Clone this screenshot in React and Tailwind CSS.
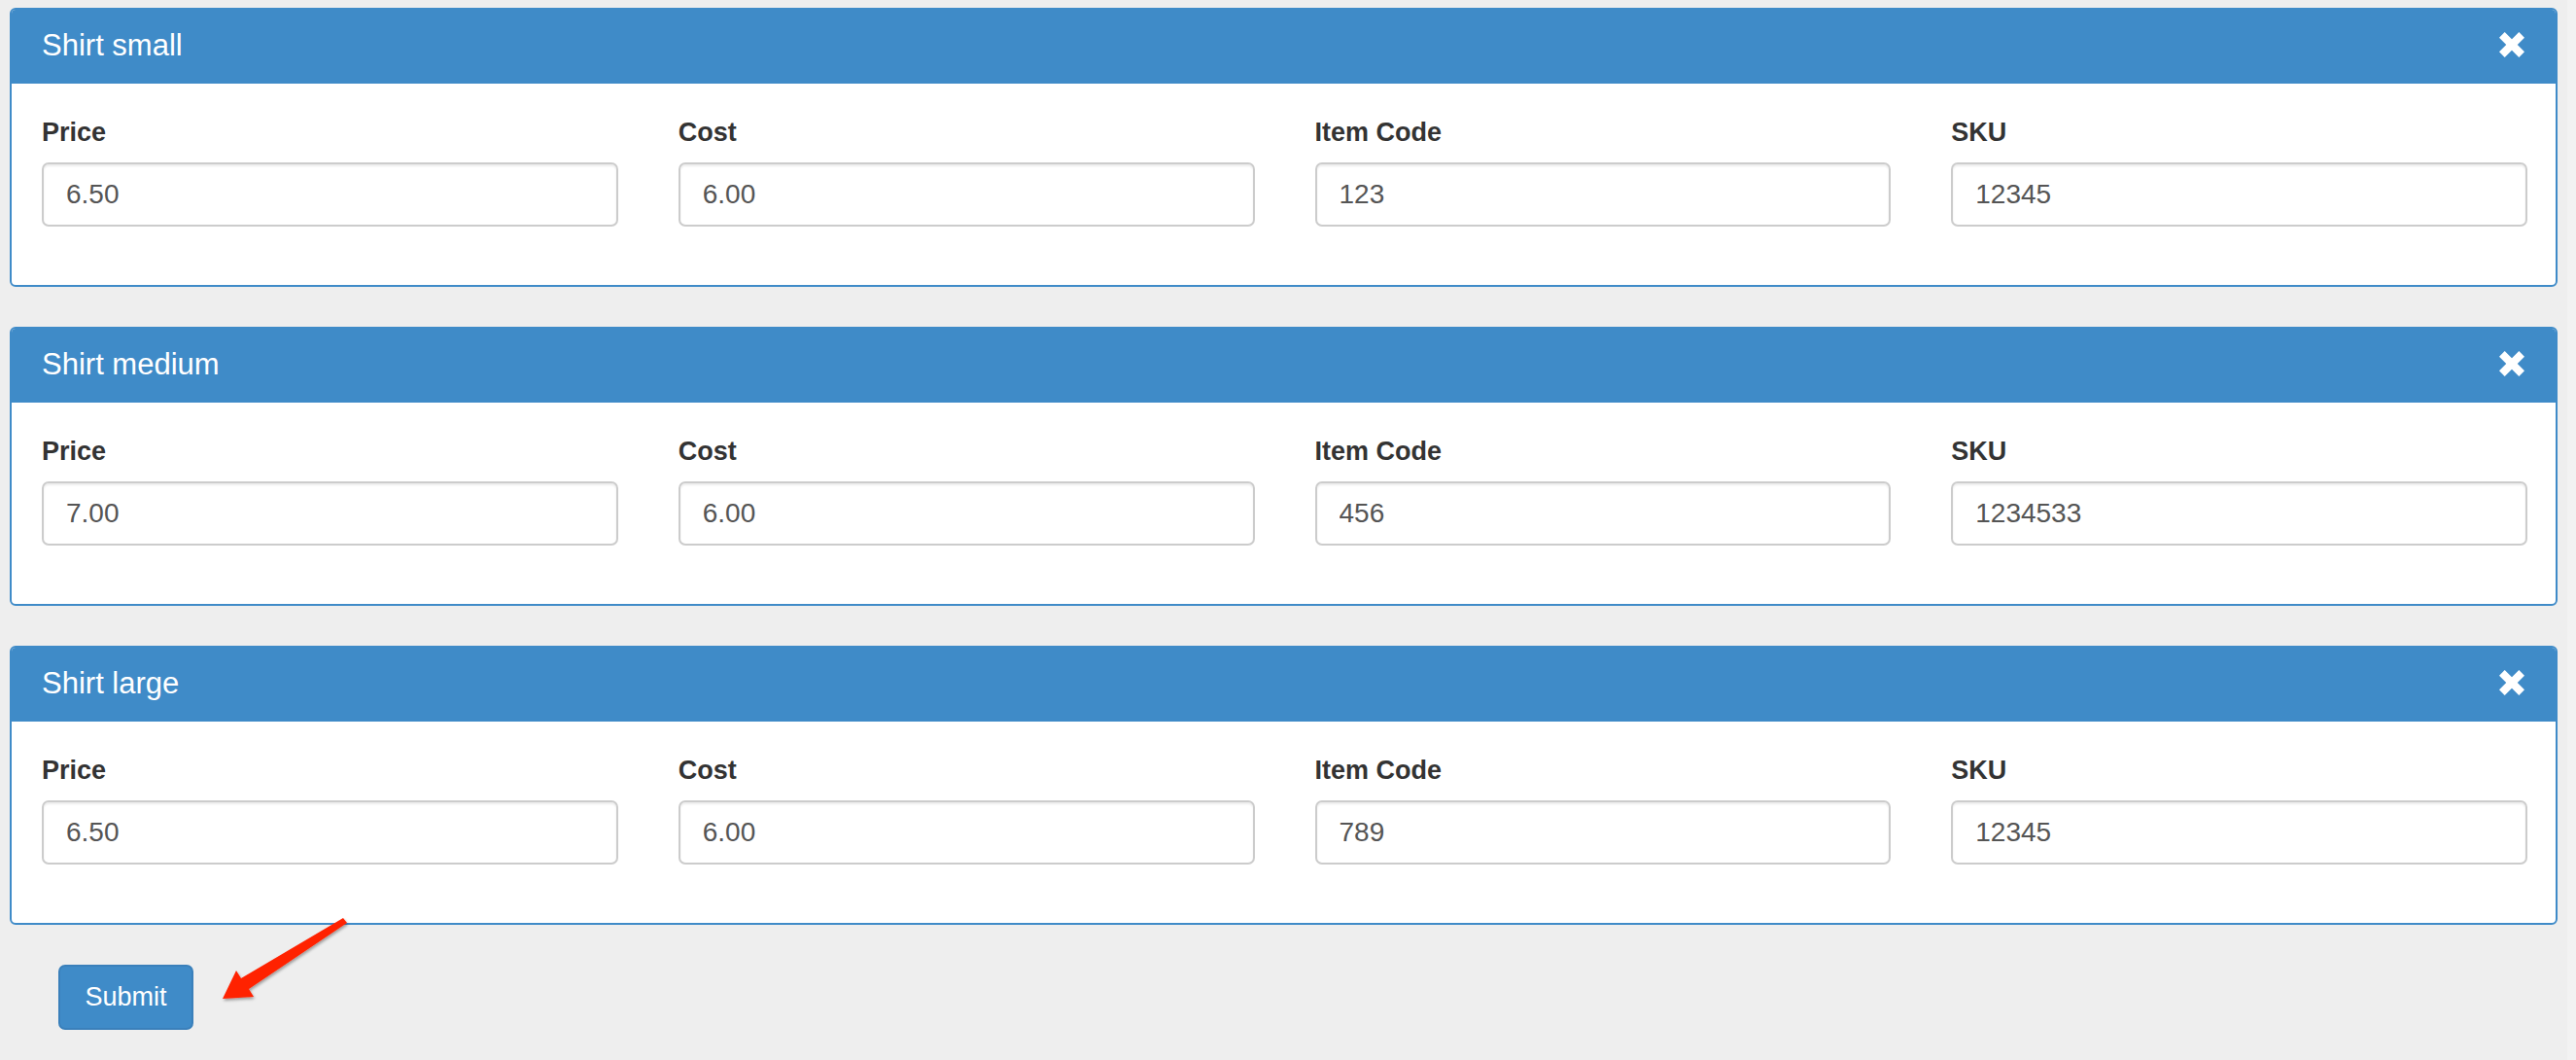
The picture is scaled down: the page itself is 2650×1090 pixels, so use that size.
// Variant editor — one panel per variant, four fields each, submit below.

const VARIANTS = [
  { id: 'small',  title: 'Shirt small',  price: '6.50', cost: '6.00', itemCode: '123', sku: '12345' },
  { id: 'medium', title: 'Shirt medium', price: '7.00', cost: '6.00', itemCode: '456', sku: '1234533' },
  { id: 'large',  title: 'Shirt large',  price: '6.50', cost: '6.00', itemCode: '789', sku: '12345' },
]

const FIELDS = [
  { key: 'price',    label: 'Price' },
  { key: 'cost',     label: 'Cost' },
  { key: 'itemCode', label: 'Item Code' },
  { key: 'sku',      label: 'SKU' },
]

export default function App() {
  return (
    <div className="relative flex h-[1090px] w-full bg-[#eeeeee] font-['Liberation_Sans',Arial,sans-serif]">
      <main className="flex-1 pl-[10px] pr-[10px] pt-[8px]">
        <div className="flex flex-col gap-[41px]">
          {VARIANTS.map((v) => <VariantPanel key={v.id} variant={v} />)}
        </div>

        <button type="button"
          className="ml-[50px] mt-[41px] h-[67px] w-[139px] rounded-[7px] border-2 border-[#3a80bb] bg-[#3f8bc8] text-[27px] text-white">
          Submit
        </button>
      </main>

      {/* scrollbar gutter */}
      <div className="w-[9px] bg-[#f2f2f2]" />

      <Arrow />
    </div>
  )
}

function VariantPanel({ variant }) {
  return (
    <section className="overflow-hidden rounded-[6px] border-2 border-[#3f8bc8] bg-white">
      <header className="flex h-[76px] items-center justify-between bg-[#3f8bc8] pb-[4px] pl-[31px] pr-[32px]">
        <h3 className="text-[31px] leading-none text-white">{variant.title}</h3>
        <CloseIcon />
      </header>
      <div className="grid grid-cols-4 gap-x-[62px] pb-[60px] pl-[31px] pr-[29px] pt-[34px]">
        {FIELDS.map((f) => (
          <div key={f.key}>
            <label className="block h-[32px] text-[27px] font-bold leading-[32px] text-[#333333]">
              {f.label}
            </label>
            <input type="text" defaultValue={variant[f.key]}
              className="mt-[15px] block h-[66px] w-full rounded-[7px] border-2 border-[#cccccc] bg-white pl-[23px] text-[28px] text-[#555555] shadow-[inset_0_2px_2px_rgba(0,0,0,0.075)] focus:outline-none" />
          </div>
        ))}
      </div>
    </section>
  )
}

function CloseIcon() {
  return (
    <svg width="26" height="26" viewBox="0 0 26 26" className="shrink-0">
      <rect x="9" y="-1.4" width="8" height="28.8" fill="#fff" transform="rotate(45 13 13)" />
      <rect x="9" y="-1.4" width="8" height="28.8" fill="#fff" transform="rotate(-45 13 13)" />
    </svg>
  )
}

function Arrow() {
  return (
    <svg className="pointer-events-none absolute left-0 top-0" width="400" height="1090" viewBox="0 0 400 1090">
      <defs>
        <filter id="arrow-shadow" x="-20%" y="-20%" width="140%" height="140%">
          <feDropShadow dx="1" dy="2" stdDeviation="1.5" floodColor="#000" floodOpacity="0.35" />
        </filter>
      </defs>
      <polygon
        points="353,944 248,1006 243,998 229,1027 261,1025 256,1017 357,949"
        fill="#ff2200" filter="url(#arrow-shadow)" />
    </svg>
  )
}
